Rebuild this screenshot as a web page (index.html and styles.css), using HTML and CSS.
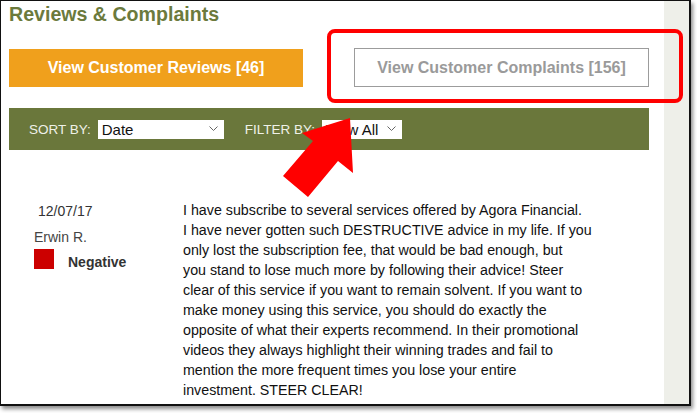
FILE: index.html
```html
<!DOCTYPE html>
<html lang="en">
  <head>
    <meta charset="UTF-8" />
    <title>Reviews &amp; Complaints</title>
    <link rel="stylesheet" href="styles.css">
  </head>
  <body>
    <div class="shot">
      <div class="main">
        <h1 class="title">Reviews &amp; Complaints</h1>

        <div class="tabs">
          <div class="tab tab-reviews">View Customer Reviews [46]</div>
          <div class="tab tab-complaints">View Customer Complaints [156]</div>
        </div>

        <div class="filter-bar">
          <span class="filter-label">SORT BY:</span>
          <div class="select select-sort">
            <span>Date</span>
            <svg width="9" height="6" viewBox="0 0 9 6"><polyline points="0.5,0.5 4.5,4.5 8.5,0.5" fill="none" stroke="#666" stroke-width="1"/></svg>
          </div>
          <span class="filter-label filter-by">FILTER BY:</span>
          <div class="select select-filter">
            <span>View All</span>
            <svg width="9" height="6" viewBox="0 0 9 6"><polyline points="0.5,0.5 4.5,4.5 8.5,0.5" fill="none" stroke="#666" stroke-width="1"/></svg>
          </div>
        </div>

        <div class="review">
          <div class="review-meta">
            <div class="review-date">12/07/17</div>
            <div class="review-name">Erwin R.</div>
            <div class="rating">
              <span class="rating-box"></span>
              <span class="rating-label">Negative</span>
            </div>
          </div>
          <p class="review-text">
            I have subscribe to several services offered by Agora Financial.<br>
            I have never gotten such DESTRUCTIVE advice in my life. If you<br>
            only lost the subscription fee, that would be bad enough, but<br>
            you stand to lose much more by following their advice! Steer<br>
            clear of this service if you want to remain solvent. If you want to<br>
            make money using this service, you should do exactly the<br>
            opposite of what their experts recommend. In their promotional<br>
            videos they always highlight their winning trades and fail to<br>
            mention the more frequent times you lose your entire<br>
            investment. STEER CLEAR!
          </p>
        </div>
      </div>
      <div class="side"></div>
    </div>

    <!-- annotation overlays -->
    <div class="highlight"></div>
    <svg class="arrow" width="76" height="85" viewBox="0 0 76 85">
      <polygon points="70,3 73,58 58,46 28,82 3,61 33,26 22,18" fill="#ff0000"/>
    </svg>
  </body>
</html>
```

FILE: styles.css
```css
body {
  margin: 0;
  background: #fff;
  position: relative;
  width: 697px;
  height: 413px;
  overflow: hidden;
  font-family: "Liberation Sans", Arial, sans-serif;
}
.shot {
  width: 691px;
  height: 406px;
  box-sizing: border-box;
  border: 1px solid #111;
  border-right-width: 2px;
  border-bottom-width: 2px;
  box-shadow: 2px 3px 4px rgba(0, 0, 0, 0.45);
  display: flex;
  overflow: hidden;
  background: #fff;
}
.main {
  flex: 1;
  padding: 1px 0 0 8px;
}
.side {
  width: 25px;
  background: #eeefe9;
}
.title {
  margin: 0;
  font-size: 19.6px;
  line-height: 24px;
  font-weight: bold;
  color: #6b7a3c;
}
.tabs {
  display: flex;
  align-items: flex-start;
  gap: 51px;
  margin-top: 22px;
}
.tab {
  box-sizing: border-box;
  font-size: 16px;
  font-weight: bold;
  text-align: center;
}
.tab-reviews {
  width: 294px;
  height: 38px;
  line-height: 38px;
  margin-top: 1px;
  background: #f0a01c;
  color: #fff;
}
.tab-complaints {
  width: 295px;
  height: 39px;
  line-height: 37px;
  border: 1px solid #9c9c9c;
  color: #9a9a9a;
}
.filter-bar {
  width: 640px;
  height: 42px;
  margin-top: 21px;
  background: #6a773b;
  display: flex;
  align-items: center;
  padding-left: 20px;
  box-sizing: border-box;
}
.filter-label {
  font-size: 13.5px;
  color: #eff1e8;
  margin-right: 7px;
}
.filter-by {
  margin-left: 21px;
}
.select {
  height: 19px;
  background: #fff;
  box-sizing: border-box;
  display: flex;
  align-items: center;
  justify-content: space-between;
  padding: 0 6px 0 4px;
  font-size: 15px;
  color: #111;
}
.select-sort {
  width: 126px;
}
.select-filter {
  width: 80px;
}
.review {
  display: flex;
  margin: 50px 0 0 25px;
}
.review-meta {
  width: 149px;
  font-size: 14px;
  line-height: 20px;
  color: #333;
}
.review-date {
  padding-left: 4px;
  margin-top: 1px;
}
.review-name {
  margin-top: 6px;
  color: #444;
}
.rating {
  display: flex;
  gap: 14px;
  margin-top: 2px;
}
.rating-box {
  width: 20px;
  height: 20px;
  background: #cc0000;
}
.rating-label {
  font-weight: bold;
  padding-top: 3px;
}
.review-text {
  margin: 0;
  font-size: 14.25px;
  line-height: 20px;
  color: #111;
  white-space: nowrap;
}
.highlight {
  position: absolute;
  left: 327px;
  top: 29px;
  width: 356px;
  height: 74px;
  box-sizing: border-box;
  border: 4px solid #ff0000;
  border-radius: 8px;
}
.arrow {
  position: absolute;
  left: 280px;
  top: 115px;
}
```
